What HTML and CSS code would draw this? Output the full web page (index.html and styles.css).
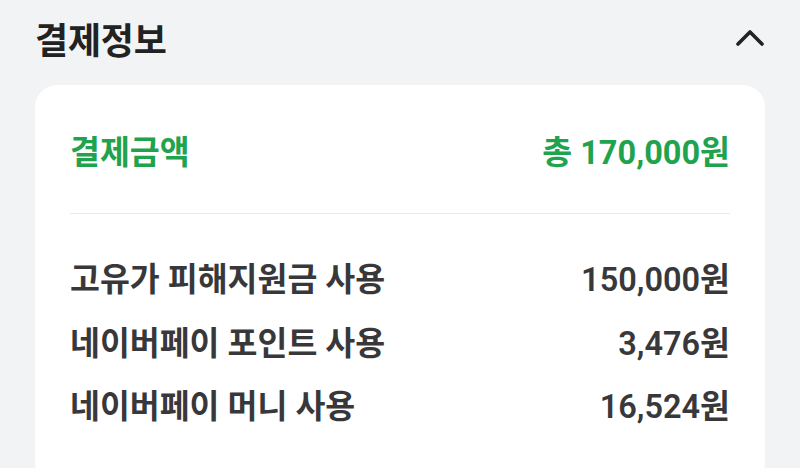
FILE: index.html
```html
<!DOCTYPE html>
<html lang="ko">
<head>
<meta charset="utf-8">
<link rel="stylesheet" href="styles.css">
</head>
<body>
<div class="page">
  <div class="header">
    <h1 class="title">결제정보</h1>
    <svg class="chevron" width="32" height="22" viewBox="0 0 32 22"><path d="M4 18 L16 6 L28 18" fill="none" stroke="#222" stroke-width="3.6" stroke-linecap="round" stroke-linejoin="round"/></svg>
  </div>
  <div class="card">
    <div class="total">
      <span class="total-label">결제금액</span>
      <span class="total-value">총 170,000원</span>
    </div>
    <div class="divider"></div>
    <div class="rows">
      <div class="row"><span class="label">고유가 피해지원금 사용</span><span class="value">150,000원</span></div>
      <div class="row"><span class="label">네이버페이 포인트 사용</span><span class="value">3,476원</span></div>
      <div class="row"><span class="label">네이버페이 머니 사용</span><span class="value">16,524원</span></div>
    </div>
  </div>
</div>
</body>
</html>
```
FILE: styles.css
```css
* { box-sizing: border-box; margin: 0; padding: 0; }
html, body { width: 800px; height: 468px; overflow: hidden; background: #f2f3f5; }
body { font-family: Roboto, "Noto Sans CJK KR", sans-serif; color: #333336; }
.page { padding: 0 35px 0 35px; }
.header { display: flex; align-items: center; justify-content: space-between; height: 76px; }
.title { font-size: 36px; font-weight: 700; color: #222; letter-spacing: -0.2px; }
.chevron { margin-right: -1px; margin-top: -2px; }
.card { background: #fff; border-radius: 22px; padding: 0 35px; margin-top: 9px; height: 400px; }
.total { display: flex; justify-content: space-between; align-items: center; height: 128px; color: #1fa34e; font-size: 32.5px; font-weight: 700; }
.divider { height: 1px; background: #e9e9eb; }
.rows { padding-top: 31px; display: flex; flex-direction: column; }
.row { display: flex; justify-content: space-between; align-items: center; height: 63.5px; font-size: 32.5px; font-weight: 600; color: #38383b; }
```
